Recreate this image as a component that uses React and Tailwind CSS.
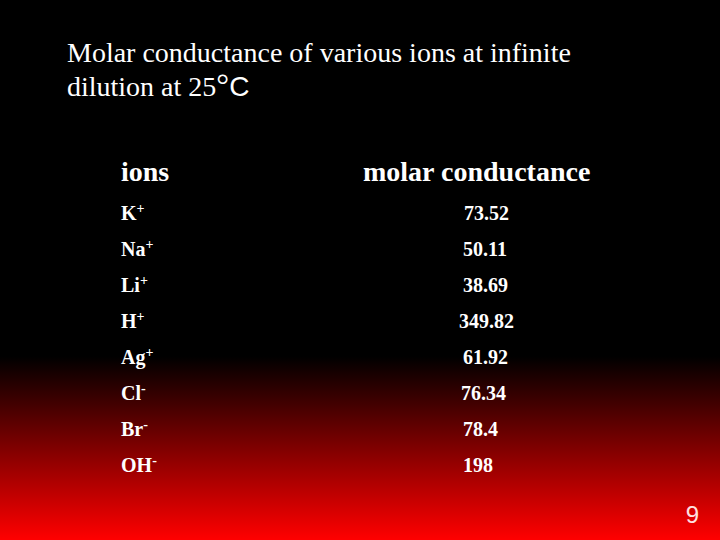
export default function App() {
  const rows = [
    { ion: "K", sup: "+", val: "73.52", pad: "pl-[1px]" },
    { ion: "Na", sup: "+", val: "50.11", pad: "pl-0" },
    { ion: "Li", sup: "+", val: "38.69", pad: "pl-0" },
    { ion: "H", sup: "+", val: "349.82", pad: "-ml-[4px]" },
    { ion: "Ag", sup: "+", val: "61.92", pad: "pl-0" },
    { ion: "Cl", sup: "-", val: "76.34", pad: "-ml-[2px]" },
    { ion: "Br", sup: "-", val: "78.4", pad: "pl-0" },
    { ion: "OH", sup: "-", val: "198", pad: "pl-0" },
  ];

  return (
    <div
      className="w-[720px] h-[540px] relative overflow-hidden text-white bg-[linear-gradient(to_bottom,#000_0%,#000_66%,#ff0000_100%)]"
      style={{ fontFamily: '"Liberation Serif", "Times New Roman", serif' }}
    >
      <div className="pl-[67px] pt-[36px] text-[28px] leading-[33px]">
        <p>Molar conductance of various ions at infinite</p>
        <p className="h-[33px]">
          dilution at 25<span className="text-[32px] leading-none">°</span>
          <span style={{ fontFamily: '"Liberation Sans", Arial, sans-serif' }}>C</span>
        </p>
      </div>

      <div className="pl-[121px] pt-[52px] font-bold">
        <div className="flex items-center h-[36px] text-[28px]">
          <span className="w-[242px]">ions</span>
          <span>molar conductance</span>
        </div>
        <div className="pt-[5px]">
          {rows.map((r) => (
            <div key={r.ion} className="flex items-center h-[36px] text-[20px]">
              <span className="w-[342px]">
                {r.ion}
                <sup className="text-[14px]">{r.sup}</sup>
              </span>
              <span className={r.pad}>{r.val}</span>
            </div>
          ))}
        </div>
      </div>

      <div
        className="absolute right-[21px] bottom-[7px] text-[24px] text-[#ffe0e0]"
        style={{ fontFamily: '"Liberation Sans", Arial, sans-serif' }}
      >
        9
      </div>
    </div>
  );
}
